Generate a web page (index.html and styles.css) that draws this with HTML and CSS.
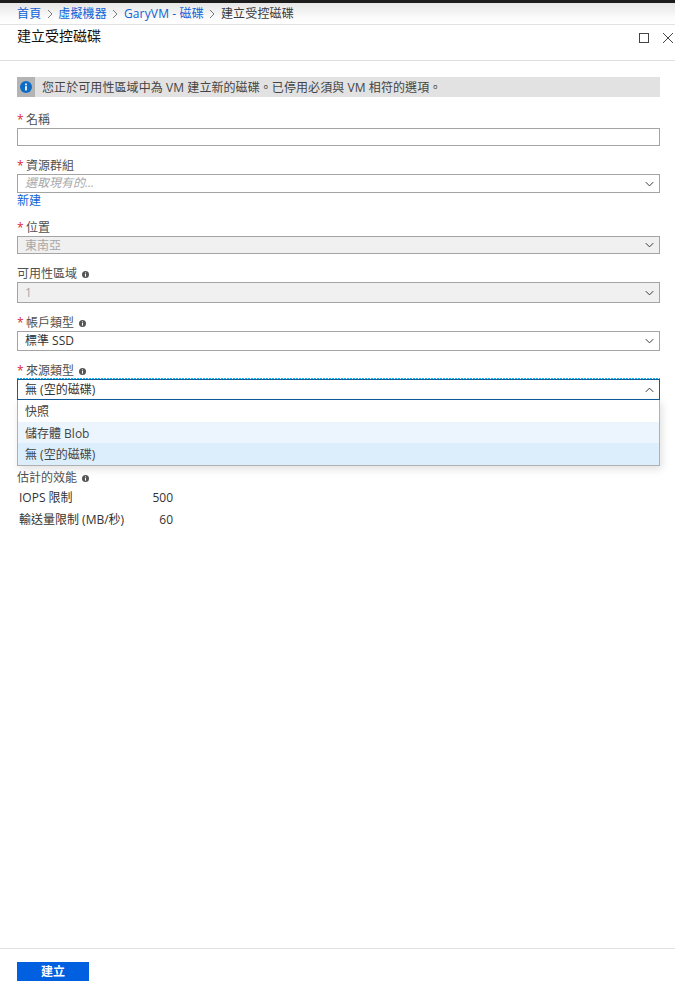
FILE: index.html
```html
<!DOCTYPE html>
<html lang="zh-TW">
<head>
    <title>建立受控磁碟</title>
    <meta http-equiv="Content-Type" content="text/html; charset=utf-8">
    <link rel="stylesheet" href="styles.css">
</head>
<body>

<div class="topbar"></div>

<div class="crumbs">
    <a href="#">首頁</a>
    <svg class="crumb-sep" viewBox="0 0 8 10"><path d="M2 1l4 4-4 4"/></svg>
    <a href="#">虛擬機器</a>
    <svg class="crumb-sep" viewBox="0 0 8 10"><path d="M2 1l4 4-4 4"/></svg>
    <a href="#">GaryVM - 磁碟</a>
    <svg class="crumb-sep" viewBox="0 0 8 10"><path d="M2 1l4 4-4 4"/></svg>
    <span>建立受控磁碟</span>
</div>

<div class="head">
    <h1>建立受控磁碟</h1>
    <div class="head-btns">
        <svg class="head-icon" viewBox="0 0 10 10"><rect x="0.5" y="0.5" width="9" height="9"/></svg>
        <svg class="head-icon" viewBox="0 0 10 10"><path d="M0 0l10 10M10 0L0 10"/></svg>
    </div>
</div>

<div class="content">
    <div class="notice">
        <span class="notice-icon">
            <svg viewBox="0 0 14 14"><circle cx="7" cy="7" r="7" fill="#0f6cc4"/><rect x="6" y="6" width="2" height="5" fill="#fff"/><rect x="6" y="3" width="2" height="2" fill="#fff"/></svg>
        </span>
        <span class="notice-text">您正於可用性區域中為 VM 建立新的磁碟。已停用必須與 VM 相符的選項。</span>
    </div>

    <div class="field">
        <label><i>*</i>名稱</label>
        <div class="box"></div>
    </div>

    <div class="field">
        <label><i>*</i>資源群組</label>
        <div class="box select placeholder">選取現有的...
            <svg class="chev" viewBox="0 0 12 7"><path d="M1 1l5 5 5-5"/></svg>
        </div>
        <a href="#" class="new">新建</a>
    </div>

    <div class="field">
        <label><i>*</i>位置</label>
        <div class="box select off short">東南亞
            <svg class="chev" viewBox="0 0 12 7"><path d="M1 1l5 5 5-5"/></svg>
        </div>
    </div>

    <div class="field">
        <label>可用性區域<svg class="tip" viewBox="0 0 8 8"><circle cx="4" cy="4" r="4"/><rect x="3.4" y="3.4" width="1.2" height="3" fill="#fff"/><rect x="3.4" y="1.6" width="1.2" height="1.1" fill="#fff"/></svg></label>
        <div class="box select off taller">1
            <svg class="chev" viewBox="0 0 12 7"><path d="M1 1l5 5 5-5"/></svg>
        </div>
    </div>

    <div class="field">
        <label><i>*</i>帳戶類型<svg class="tip" viewBox="0 0 8 8"><circle cx="4" cy="4" r="4"/><rect x="3.4" y="3.4" width="1.2" height="3" fill="#fff"/><rect x="3.4" y="1.6" width="1.2" height="1.1" fill="#fff"/></svg></label>
        <div class="box select tall">標準 SSD
            <svg class="chev" viewBox="0 0 12 7"><path d="M1 1l5 5 5-5"/></svg>
        </div>
    </div>

    <div class="field">
        <label><i>*</i>來源類型<svg class="tip" viewBox="0 0 8 8"><circle cx="4" cy="4" r="4"/><rect x="3.4" y="3.4" width="1.2" height="3" fill="#fff"/><rect x="3.4" y="1.6" width="1.2" height="1.1" fill="#fff"/></svg></label>
        <div class="combo">
            <div class="box select open">無 (空的磁碟)
                <svg class="chev" viewBox="0 0 12 7"><path d="M1 6l5-5 5 5"/></svg>
            </div>
            <div class="menu">
                <div class="opt first">快照</div>
                <div class="opt hover">儲存體 Blob</div>
                <div class="opt picked">無 (空的磁碟)</div>
            </div>
        </div>
    </div>

    <div class="perf">
        <div class="perf-title">估計的效能<svg class="tip" viewBox="0 0 8 8"><circle cx="4" cy="4" r="4"/><rect x="3.4" y="3.4" width="1.2" height="3" fill="#fff"/><rect x="3.4" y="1.6" width="1.2" height="1.1" fill="#fff"/></svg></div>
        <div class="perf-row"><span>IOPS 限制</span><b>500</b></div>
        <div class="perf-row"><span>輸送量限制 (MB/秒)</span><b>60</b></div>
    </div>
</div>

<div class="foot">
    <a href="#" class="create">建立</a>
</div>

</body>
</html>
```

FILE: styles.css
```css
html, body {
    margin: 0;
    padding: 0;
    height: 986px;
    overflow: hidden;
    background-color: white;
    color: #3a3a3a;
    font-family: "Open Sans", "Noto Sans CJK TC", sans-serif;
    font-size: 12px;
}

body {
    display: flex;
    flex-direction: column;
}

a {
    color: #0f62d6;
    text-decoration: none;
}

.topbar {
    height: 3px;
    background-color: #1c1c1c;
}

.crumbs {
    height: 22px;
    box-sizing: border-box;
    display: flex;
    align-items: center;
    padding: 1px 0 0 17px;
    background: linear-gradient(#e6e6e6, #fbfbfb 70%, #ffffff);
    border-bottom: 1px solid #e2e2e2;
    line-height: 20px;
    letter-spacing: 0.15px;
}

.crumb-sep {
    width: 8px;
    height: 10px;
    margin: 0 4.5px;
    fill: none;
    stroke: #7a7a7a;
    stroke-width: 1;
}

.head {
    height: 36px;
    box-sizing: border-box;
    display: flex;
    justify-content: space-between;
    border-bottom: 1px solid #dedede;
}

h1 {
    margin: 1px 0 0 17px;
    font-size: 14px;
    font-weight: 400;
    line-height: 20px;
    color: #111111;
}

.head-btns {
    display: flex;
    gap: 14px;
    padding: 8px 2px 0 0;
}

.head-icon {
    width: 10px;
    height: 10px;
    fill: none;
    stroke: #444444;
    stroke-width: 1;
}

.content {
    flex: 1;
    padding: 16px 15px 0 17px;
}

.notice {
    height: 20px;
    display: flex;
    align-items: center;
    background-color: #e2e2e2;
}

.notice-icon {
    width: 18px;
    height: 20px;
    display: flex;
    align-items: center;
    justify-content: center;
    background-color: #b4b4b4;
    margin-right: 7px;
}

.notice-icon svg {
    width: 12px;
    height: 12px;
}

.notice-text {
    letter-spacing: 0.08px;
    color: #444444;
}

.field {
    margin-top: 13px;
}

.notice + .field {
    margin-top: 16px;
}

.field label {
    display: flex;
    align-items: center;
    height: 14px;
    line-height: 14px;
    color: #505050;
}

.field label i {
    color: #e0243c;
    font-style: normal;
    width: 9px;
}

.tip {
    width: 7px;
    height: 7px;
    margin-left: 5px;
    fill: #555555;
}

.box {
    position: relative;
    box-sizing: border-box;
    height: 18px;
    margin-top: 1px;
    border: 1px solid #a4a4a4;
    padding-left: 7px;
    line-height: 16px;
    color: #333333;
}

.select {
    height: 19px;
}

.select.short {
    height: 18px;
    line-height: 17px;
}

.select.tall {
    height: 20px;
    line-height: 18px;
}

.select.taller {
    height: 21px;
    line-height: 19px;
}

.select.off {
    background-color: #f0f0f0;
    color: #a8a8a8;
}

.placeholder {
    color: #a8a8a8;
    font-style: italic;
}

.chev {
    position: absolute;
    right: 5px;
    top: 50%;
    width: 9px;
    height: 6px;
    margin-top: -3px;
    fill: none;
    stroke: #333333;
    stroke-width: 1.3;
}

.new {
    display: block;
    height: 14px;
    margin-top: 1px;
    line-height: 14px;
}

.combo {
    position: relative;
    height: 22px;
    box-sizing: border-box;
    padding-top: 1px;
    background: repeating-linear-gradient(90deg, #0fb4ec 0 2px, #ffffff 2px 3px) no-repeat top / 100% 1px;
}

.box.open {
    height: 21px;
    margin-top: 0;
    border: 1px solid #0f5c9e;
    line-height: 20px;
}

.menu {
    position: absolute;
    top: 22px;
    left: 0;
    right: 0;
    z-index: 2;
    background-color: white;
    border: 1px solid #b0b0b0;
    border-top: none;
    box-shadow: 2px 3px 8px rgba(0, 0, 0, 0.12);
}

.opt {
    height: 21px;
    padding-left: 7px;
    line-height: 23px;
    color: #444444;
}

.opt.first {
    height: 22px;
}

.opt.hover {
    background-color: #ecf5fd;
}

.opt.picked {
    height: 22px;
    line-height: 24px;
    background-color: #dceefc;
}

.perf {
    margin-top: 71px;
}

.perf-title {
    display: flex;
    align-items: center;
    height: 14px;
    margin-bottom: -1px;
    line-height: 14px;
    color: #505050;
}

.perf-row {
    display: flex;
    justify-content: space-between;
    width: 154px;
    margin-left: 2px;
    height: 17px;
    margin-top: 5px;
    line-height: 17px;
    color: #333333;
}

.perf-row b {
    font-weight: 400;
}

.foot {
    height: 38px;
    box-sizing: border-box;
    border-top: 1px solid #e0e0e0;
    padding: 13px 0 0 17px;
}

.create {
    display: block;
    width: 72px;
    height: 19px;
    background-color: #0060df;
    color: white;
    font-weight: 700;
    text-align: center;
    line-height: 19px;
}
```
